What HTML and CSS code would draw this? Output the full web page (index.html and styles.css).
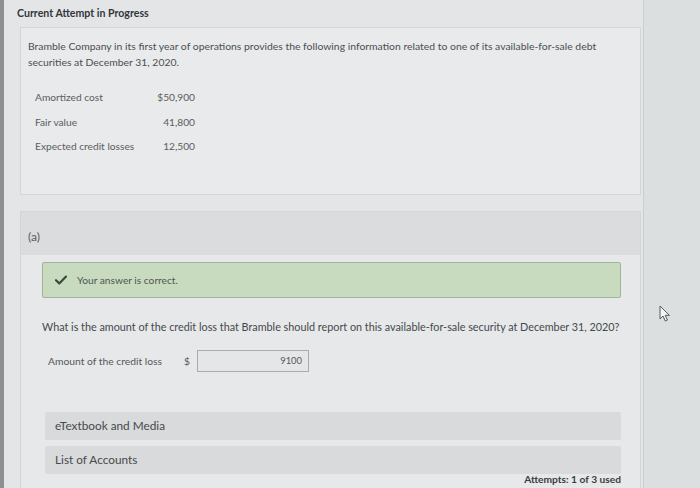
FILE: index.html
```html
<!DOCTYPE html>
<html lang="en">
<head>
<meta charset="utf-8">
<title>Current Attempt in Progress</title>
<link rel="stylesheet" href="styles.css">
</head>
<body>
<div class="page">
  <div class="edge"></div>
  <main class="main">
    <h1 class="title">Current Attempt in Progress</h1>
    <section class="question">
      <p class="intro">Bramble Company in its first year of operations provides the following information related to one of its available-for-sale debt securities at December 31, 2020.</p>
      <table class="data">
        <tr><td class="lbl">Amortized cost</td><td class="val">$50,900</td></tr>
        <tr><td class="lbl">Fair value</td><td class="val">41,800</td></tr>
        <tr><td class="lbl">Expected credit losses</td><td class="val">12,500</td></tr>
      </table>
    </section>
    <section class="part">
      <div class="part-head">(a)</div>
      <div class="part-body">
        <div class="alert">
          <svg class="check" viewBox="0 0 12 10" width="12" height="10"><path d="M1 5.2 L4.3 8.4 L11 1.6" fill="none" stroke="#3b4a3b" stroke-width="2.2" stroke-linecap="round" stroke-linejoin="round"/></svg>
          <span>Your answer is correct.</span>
        </div>
        <p class="ask">What is the amount of the credit loss that Bramble should report on this available-for-sale security at December 31, 2020?</p>
        <div class="answer">
          <span class="answer-label">Amount of the credit loss</span>
          <span class="dollar">$</span>
          <span class="input">9100</span>
        </div>
        <div class="bar">eTextbook and Media</div>
        <div class="bar">List of Accounts</div>
        <div class="attempts">Attempts: 1 of 3 used</div>
      </div>
    </section>
  </main>
  <div class="side"></div>
</div>
<svg class="cursor" viewBox="0 0 12 18" width="12" height="18"><path d="M1 1 L1 14 L4 11 L6.3 16 L8.4 15 L6.2 10.3 L10.4 10.3 Z" fill="#f4f5f5" stroke="#55595c" stroke-width="1" stroke-linejoin="round"/></svg>
</body>
</html>
```

FILE: styles.css
```css
* { box-sizing: border-box; }
html, body { margin: 0; padding: 0; }
body {
  font-family: Lato, "Open Sans", "Liberation Sans", sans-serif;
  color: #4a4d50;
  background: #dcdfe0;
  width: 700px;
  height: 488px;
  overflow: hidden;
  position: relative;
}
.page { display: flex; height: 488px; }
.edge { width: 4px; background: #8c9093; }
.main {
  width: 640px;
  background: #e3e5e7;
  padding: 0 2px 0 16px;
  border-right: 1px solid #cbced0;
}
.side { flex: 1; background: #dcdfe0; }
.title {
  margin: 0 0 7px -3px;
  padding-top: 6px;
  font-size: 10.6px;
  line-height: 14px;
  font-weight: 700;
  color: #33363a;
}
.question {
  background: #e8eaeb;
  border: 1px solid #d3d6d8;
  padding: 10px 7px 35px 7px;
  height: 168px;
}
.intro {
  margin: 0;
  font-size: 10.4px;
  line-height: 16px;
  color: #4b4e52;
  width: 580px;
}
.data { border-collapse: collapse; margin: 15px 0 0 7px; }
.data td { padding: 0; height: 24.5px; font-size: 10.2px; color: #5a5d60; }
.lbl { width: 120px; }
.val { width: 40px; text-align: right; }
.part {
  margin-top: 16px;
  border: 1px solid #d3d6d8;
  border-bottom: none;
  height: 290px;
  background: #e6e8e9;
}
.part-head {
  background: #dadcde;
  height: 43px;
  padding: 18px 7px 0;
  font-size: 12px;
  line-height: 14px;
  color: #56595d;
}
.part-body { padding: 7px 19px 0 21px; }
.alert {
  display: flex;
  align-items: center;
  height: 36px;
  background: #c9dbbf;
  border: 1px solid #a2b39a;
  border-radius: 2px;
  padding-left: 12px;
  font-size: 10.2px;
  color: #4f5550;
}
.check { margin-right: 10px; }
.ask {
  margin: 21px 0 0;
  font-size: 10.8px;
  line-height: 16px;
  color: #45484c;
}
.answer {
  display: flex;
  align-items: center;
  margin: 15px 0 0 6px;
  height: 22px;
  font-size: 10.3px;
  color: #55585b;
}
.answer-label { width: 136px; }
.dollar { width: 13px; }
.input {
  width: 112px;
  height: 22px;
  border: 1px solid #a9acae;
  background: #e4e6e7;
  text-align: right;
  padding: 0 6px;
  line-height: 20px;
  font-size: 9.4px;
  color: #55585b;
}
.bar {
  margin: 6px 0 0 3px;
  height: 28px;
  background: #d8dadb;
  border-radius: 2px;
  padding-left: 10px;
  font-size: 11.8px;
  line-height: 28px;
  color: #47494c;
}
.answer + .bar { margin-top: 40px; }
.attempts {
  text-align: right;
  font-size: 10.2px;
  font-weight: 700;
  line-height: 12px;
  color: #3a3d40;
  margin-top: -1px;
}
.cursor { position: absolute; left: 659px; top: 305px; }
```
